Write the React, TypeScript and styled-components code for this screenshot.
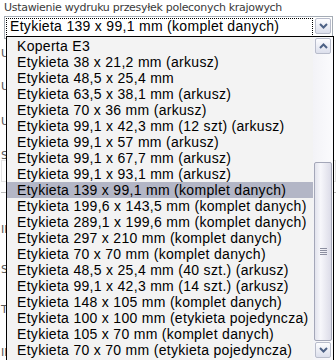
import styled, { createGlobalStyle } from "styled-components";

const Global = createGlobalStyle`
  html, body { margin: 0; padding: 0; background: #fff; }
  body { width: 336px; height: 360px; overflow: hidden; font-family: "Liberation Sans", Arial, sans-serif; }
`;

const Page = styled.div`
  position: relative;
  width: 336px;
  height: 360px;
  overflow: hidden;
`;

const Caption = styled.div`
  padding: 1px 0 0 4px;
  height: 14px;
  font-size: 11px;
  color: #3a3a3a;
  font-family: "DejaVu Sans", sans-serif;
  letter-spacing: -0.3px;
`;

const Combo = styled.div`
  margin: 1px 3px 0 4px;
  height: 19px;
  border: 1px solid #a5acb5;
  display: flex;
  align-items: stretch;
  padding: 1px;
  background: #fff;
`;

const ComboText = styled.div`
  flex: 1;
  border: 1px dotted #000;
  font-size: 14px;
  letter-spacing: 0.3px;
  line-height: 15px;
  padding-left: 3px;
  color: #000;
  white-space: nowrap;
  overflow: hidden;
`;

const ArrowBtn = styled.div`
  width: 16px;
  height: 16px;
  margin-left: 2px;
  box-sizing: border-box;
  border: 1px solid #b8bccb;
  border-radius: 2px;
  background: linear-gradient(#fdfdff, #dcdfec);
  display: flex;
  align-items: center;
  justify-content: center;
`;

const Form = styled.div`
  display: flex;
  flex-direction: column;
  padding: 8px 0 0 1px;
`;

const FormRow = styled.div<{ $h: number }>`
  height: ${(p) => p.$h}px;
  font-size: 11px;
  color: #555;
  font-family: "DejaVu Sans", sans-serif;
`;

const FieldBox = styled.div`
  height: 20px;
  border: 1px solid #e4e4e4;
  margin-bottom: 10px;
`;

const Rule = styled.div`
  height: 1px;
  background: #bbb;
  margin-bottom: 30px;
`;

const Popup = styled.div`
  position: absolute;
  left: 6px;
  top: 36px;
  width: 328px;
  height: 324px;
  box-sizing: border-box;
  border: 1px solid #000;
  border-bottom: none;
  background: #f3f3f3;
  display: flex;
`;

const List = styled.ul`
  flex: 1;
  list-style: none;
  margin: 0;
  padding: 1px 0 0 0;
`;

const Item = styled.li<{ $sel?: boolean }>`
  height: 16px;
  line-height: 16px;
  font-size: 14px;
  letter-spacing: 0.3px;
  padding-left: 10px;
  white-space: nowrap;
  color: #000;
  background: ${(p) => (p.$sel ? "#b3b6c6" : "transparent")};
`;

const Scroll = styled.div`
  width: 19px;
  display: flex;
  flex-direction: column;
  background: linear-gradient(90deg, #f3f3f7, #fbfbfd);
  padding: 1px 1px 2px 0;
`;

const Track = styled.div`
  flex: 1;
  display: flex;
  flex-direction: column;
  justify-content: flex-end;
`;

const Thumb = styled.div`
  height: 179px;
  margin: 0 0 1px 1px;
  box-sizing: border-box;
  border: 1px solid #a4a7b8;
  border-radius: 2px;
  background: linear-gradient(90deg, #e2e3ed, #f7f7fb 35%, #dcdce8);
  display: flex;
  align-items: center;
  justify-content: center;
`;

const Grip = styled.div`
  width: 7px;
  height: 7px;
  background: repeating-linear-gradient(#8c8fa0 0 1px, transparent 1px 2px);
`;

const Chevron = ({ up }: { up?: boolean }) => (
  <svg width="9" height="6" viewBox="0 0 9 6">
    <path
      d={up ? "M1 5 L4.5 1.5 L8 5" : "M1 1 L4.5 4.5 L8 1"}
      fill="none"
      stroke="#4d6185"
      strokeWidth="2"
    />
  </svg>
);

const items = [
  "Koperta E3",
  "Etykieta 38 x 21,2 mm (arkusz)",
  "Etykieta 48,5 x 25,4 mm",
  "Etykieta 63,5 x 38,1 mm (arkusz)",
  "Etykieta 70 x 36 mm (arkusz)",
  "Etykieta 99,1 x 42,3 mm (12 szt) (arkusz)",
  "Etykieta 99,1 x 57 mm (arkusz)",
  "Etykieta 99,1 x 67,7 mm (arkusz)",
  "Etykieta 99,1 x 93,1 mm (arkusz)",
  "Etykieta 139 x 99,1 mm (komplet danych)",
  "Etykieta 199,6 x 143,5 mm (komplet danych)",
  "Etykieta 289,1 x 199,6 mm (komplet danych)",
  "Etykieta 297 x 210 mm (komplet danych)",
  "Etykieta 70 x 70 mm (komplet danych)",
  "Etykieta 48,5 x 25,4 mm (40 szt.) (arkusz)",
  "Etykieta 99,1 x 42,3 mm (14 szt.) (arkusz)",
  "Etykieta 148 x 105 mm (komplet danych)",
  "Etykieta 100 x 100 mm (etykieta pojedyncza)",
  "Etykieta 105 x 70 mm (komplet danych)",
  "Etykieta 70 x 70 mm (etykieta pojedyncza)",
];

const selected = "Etykieta 139 x 99,1 mm (komplet danych)";

export default function App() {
  return (
    <Page>
      <Global />
      <Caption>Ustawienie wydruku przesyłek poleconych krajowych</Caption>
      <Combo>
        <ComboText>{selected}</ComboText>
        <ArrowBtn>
          <Chevron />
        </ArrowBtn>
      </Combo>
      <Form>
        <FormRow $h={33}>U</FormRow>
        <FormRow $h={35}>U</FormRow>
        <FormRow $h={34}>U</FormRow>
        <FormRow $h={11}>S</FormRow>
        <FieldBox />
        <Rule />
        <FormRow $h={40}>Il</FormRow>
        <FormRow $h={40}>S</FormRow>
        <FormRow $h={43}>T</FormRow>
        <FormRow $h={14}>Il</FormRow>
      </Form>
      <Popup>
        <List>
          {items.map((t) => (
            <Item key={t} $sel={t === selected}>
              {t}
            </Item>
          ))}
        </List>
        <Scroll>
          <ArrowBtn>
            <Chevron up />
          </ArrowBtn>
          <Track>
            <Thumb>
              <Grip />
            </Thumb>
          </Track>
          <ArrowBtn>
            <Chevron />
          </ArrowBtn>
        </Scroll>
      </Popup>
    </Page>
  );
}
